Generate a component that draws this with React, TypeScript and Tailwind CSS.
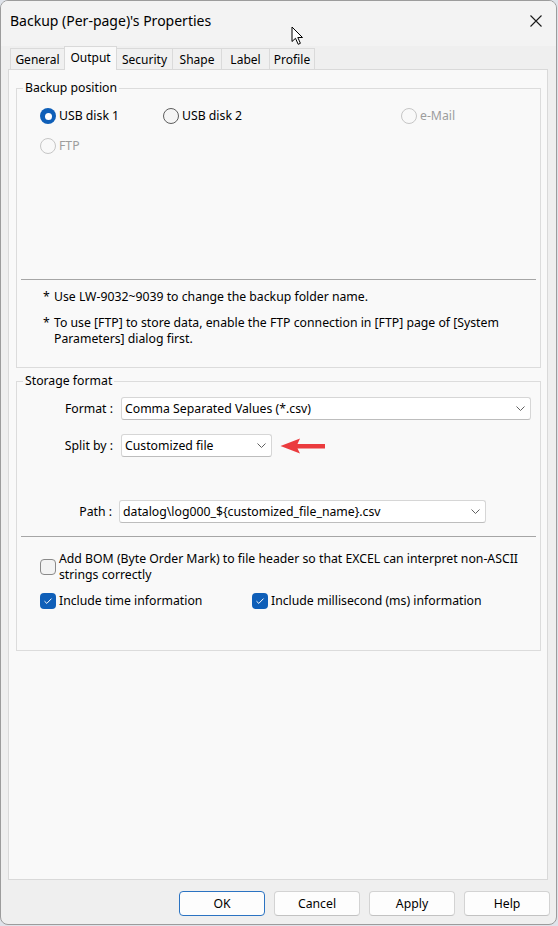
import React from "react";

/**
 * Boîte de dialogue "Backup (Per-page)'s Properties" - onglet Output
 */

const tabs = [
  { label: "General", w: "w-[55px]" },
  { label: "Output", w: "w-[53px]", active: true },
  { label: "Security", w: "w-[56px]" },
  { label: "Shape", w: "w-[49px]" },
  { label: "Label", w: "w-[48px]" },
  { label: "Profile", w: "w-[45px]" },
];

function Radio({ label, checked, disabled }: { label: string; checked?: boolean; disabled?: boolean }) {
  return (
    <div className="flex items-center h-[16px] gap-[3px]">
      {checked ? (
        <span className="w-[16px] h-[16px] rounded-full bg-[#0f5fb8] flex items-center justify-center">
          <span className="w-[7px] h-[7px] rounded-full bg-white" />
        </span>
      ) : (
        <span
          className={`w-[16px] h-[16px] rounded-full border ${
            disabled ? "border-[#c6c6c6] bg-[#f9f9f9]" : "border-[#5e5e5e] bg-[#f5f5f5]"
          }`}
        />
      )}
      <span className={disabled ? "text-[#9d9d9d]" : "text-black"}>{label}</span>
    </div>
  );
}

function Checkbox({ checked }: { checked?: boolean }) {
  return checked ? (
    <span className="w-[16px] h-[16px] rounded-[4px] bg-[#0f5fb8] flex items-center justify-center flex-shrink-0">
      <svg width="10" height="8" viewBox="0 0 10 8" fill="none">
        <path d="M1.5 4.2 L3.8 6.4 L8.5 1.6" stroke="white" strokeWidth="1" />
      </svg>
    </span>
  ) : (
    <span className="w-[16px] h-[16px] rounded-[4px] border border-[#8a8a8a] bg-[#f3f3f3] flex-shrink-0" />
  );
}

function Select({ value, w }: { value: string; w: string }) {
  return (
    <div
      className={`${w} h-[23px] bg-white border border-[#d6d6d6] border-b-[#bdbdbd] rounded-[3px] flex items-center justify-between pl-[3px] pr-[5px]`}
    >
      <span className="text-black whitespace-nowrap">{value}</span>
      <svg width="9" height="5" viewBox="0 0 9 5" fill="none">
        <path d="M0.5 0.5 L4.5 4.5 L8.5 0.5" stroke="#606060" strokeWidth="1" />
      </svg>
    </div>
  );
}

function Button({ label, primary }: { label: string; primary?: boolean }) {
  return (
    <button
      className={`w-[86px] h-[25px] rounded-[4px] bg-[#fdfdfd] text-black border ${
        primary ? "border-[#2b73c2]" : "border-[#d3d3d3] border-b-[#c2c2c2]"
      }`}
    >
      {label}
    </button>
  );
}

export default function App() {
  return (
    <div className="w-[558px] h-[926px] bg-[#dfe3ea] font-['Noto_Sans',sans-serif] text-[12.25px] leading-[16px] text-black">
      <div className="relative w-[557px] h-[925px] bg-[#efefef] border border-[#9c9c9c] rounded-[8px] overflow-hidden flex flex-col">
        {/* Barre de titre */}
        <div className="h-[45px] bg-[#f3f3f3] flex items-start justify-between pt-[10px] pl-[9px] pr-[14px]">
          <span className="text-[14px] leading-[20px]">Backup (Per-page)'s Properties</span>
          <svg width="12" height="12" viewBox="0 0 12 12" className="mt-[4px]">
            <path d="M0.5 0.5 L11.5 11.5 M11.5 0.5 L0.5 11.5" stroke="#1a1a1a" strokeWidth="1.1" />
          </svg>
        </div>

        {/* Onglets */}
        <div className="relative z-10 flex items-start h-[24px] pl-[9px] text-[12px]">
          {tabs.map((t, i) =>
            t.active ? (
              <div
                key={t.label}
                className={`${t.w} -ml-px h-[24px] bg-[#f9f9f9] border-t border-l border-r border-[#d9d9d9] flex justify-center pt-[3px]`}
              >
                {t.label}
              </div>
            ) : (
              <div
                key={t.label}
                className={`${t.w} ${i === 0 ? "border-l" : ""} mt-[2px] h-[21px] bg-[#f0f0f0] border-t border-r border-[#dadada] flex justify-center pt-[3px]`}
              >
                {t.label}
              </div>
            )
          )}
        </div>

        {/* Panneau */}
        <div className="-mt-px ml-[7px] w-[540px] h-[811px] bg-[#f9f9f9] border border-[#d9d9d9] pt-[10px]">
          {/* Backup position */}
          <fieldset className="ml-[7px] w-[525px] h-[288px] border border-[#dcdcdc]">
            <legend className="ml-[6px] px-[2px]">Backup position</legend>
            <div className="flex mt-[12px] pl-[23px]">
              <div className="w-[123px]">
                <Radio label="USB disk 1" checked />
              </div>
              <div className="w-[238px]">
                <Radio label="USB disk 2" />
              </div>
              <Radio label="e-Mail" disabled />
            </div>
            <div className="mt-[14px] pl-[23px]">
              <Radio label="FTP" disabled />
            </div>
            <div className="mt-[125px] mx-[4px] h-px bg-[#a6a6a6]" />
            <div className="mt-[9px] pl-[26px] flex">
              <span className="w-[11px] flex-shrink-0">*</span>
              <span>Use LW-9032~9039 to change the backup folder name.</span>
            </div>
            <div className="mt-[10px] pl-[26px] pr-[12px] flex">
              <span className="w-[11px] flex-shrink-0">*</span>
              <span>
                To use [FTP] to store data, enable the FTP connection in [FTP] page of [System Parameters] dialog
                first.
              </span>
            </div>
          </fieldset>

          {/* Storage format */}
          <fieldset className="mt-[5px] ml-[7px] w-[525px] h-[278px] border border-[#dcdcdc]">
            <legend className="ml-[6px] px-[2px]">Storage format</legend>
            <div className="mt-[8px] flex items-center">
              <span className="w-[96px] text-right">Format :</span>
              <div className="ml-[8px]">
                <Select value="Comma Separated Values (*.csv)" w="w-[410px]" />
              </div>
            </div>
            <div className="mt-[14px] flex items-center">
              <span className="w-[96px] text-right">Split by :</span>
              <div className="ml-[8px]">
                <Select value="Customized file" w="w-[151px]" />
              </div>
              <svg width="46" height="18" viewBox="0 0 46 18" className="ml-[8px]">
                <path d="M0.5 9 L20 1.5 L17.5 7 L45 7 L45 11.5 L17.5 11.5 L20 16.5 Z" fill="#eb3b3e" />
              </svg>
            </div>
            <div className="mt-[43px] flex items-center">
              <span className="w-[95px] text-right">Path :</span>
              <div className="ml-[7px]">
                <Select value="datalog\log000_${customized_file_name}.csv" w="w-[367px]" />
              </div>
            </div>
            <div className="mt-[13px] mx-[4px] h-px bg-[#a6a6a6]" />
            <div className="mt-[14px] pl-[23px] pr-[10px] flex items-center gap-[3px]">
              <Checkbox />
              <span>
                Add BOM (Byte Order Mark) to file header so that EXCEL can interpret non-ASCII strings correctly
              </span>
            </div>
            <div className="mt-[10px] pl-[23px] flex items-center h-[16px]">
              <div className="w-[212px] flex items-center gap-[3px]">
                <Checkbox checked />
                <span>Include time information</span>
              </div>
              <div className="flex items-center gap-[3px]">
                <Checkbox checked />
                <span>Include millisecond (ms) information</span>
              </div>
            </div>
          </fieldset>
        </div>

        {/* Boutons */}
        <div className="mt-[11px] flex justify-end gap-[9px] pr-[6px]">
          <Button label="OK" primary />
          <Button label="Cancel" />
          <Button label="Apply" />
          <Button label="Help" />
        </div>

        {/* Curseur de la souris */}
        <svg width="14" height="20" viewBox="0 0 14 20" className="absolute left-[290px] top-[25px]">
          <path
            d="M1 1 L1 15.5 L4.5 12.3 L7.2 18.3 L9.4 17.3 L6.8 11.5 L11.5 11.5 Z"
            fill="white"
            stroke="black"
            strokeWidth="1"
            strokeLinejoin="round"
          />
        </svg>
      </div>
    </div>
  );
}
